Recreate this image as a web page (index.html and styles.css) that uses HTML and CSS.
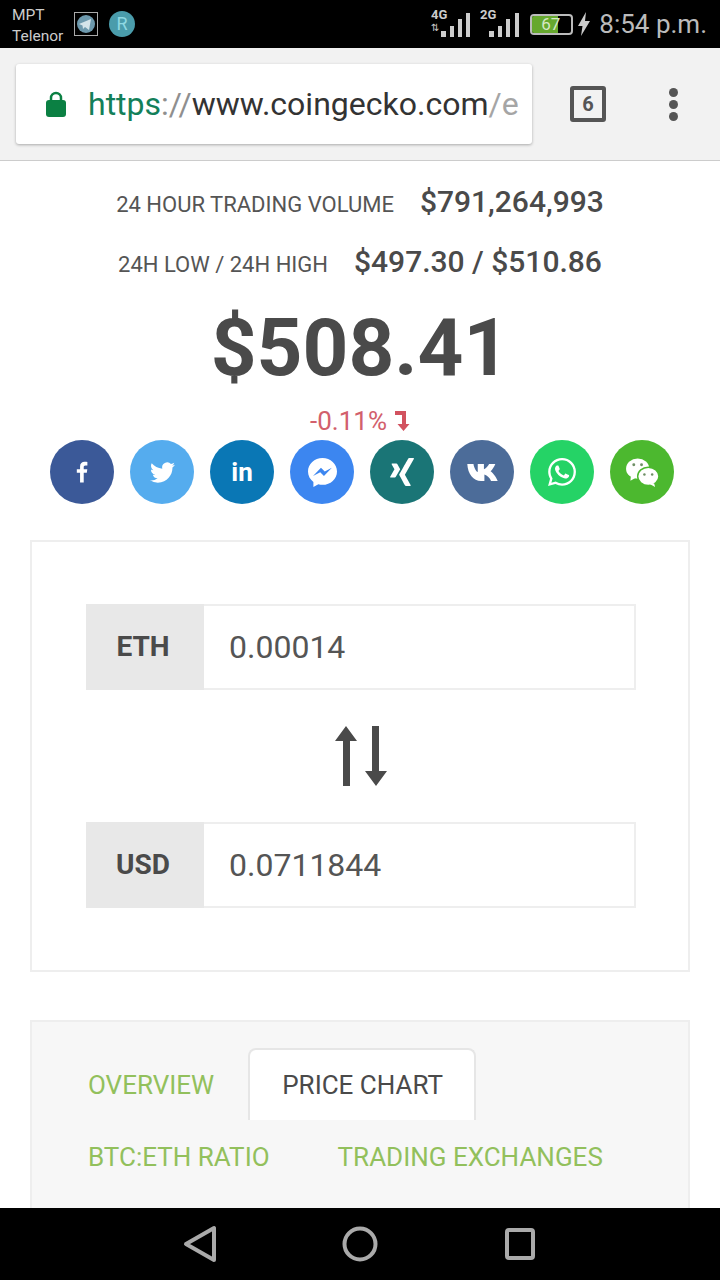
FILE: index.html
```html
<!DOCTYPE html>
<html>
<head>
  <title>Ethereum price</title>
  <link rel="stylesheet" href="styles.css">
</head>
<body>
  <!-- Phone status bar -->
  <div class="status-bar">
    <div class="status-left">
      <div class="carrier">MPT<br>Telenor</div>
      <div class="telegram-icon">
        <svg width="20" height="20" viewBox="0 0 20 20"><circle cx="10" cy="10" r="9" fill="#6d99ad"/><path d="M3 10l12-5-2 11-4-3-2 2-.5-3.500z" fill="#d5e4ea"/></svg>
      </div>
      <div class="r-badge">R</div>
    </div>
    <div class="status-right">
      <svg class="signal-one" width="40" height="36" viewBox="0 -3 40 36">
        <text x="0" y="10" class="signal-text">4G</text>
        <text x="0" y="22" class="signal-tiny">⇅</text>
        <rect x="10" y="22" width="5" height="6" fill="#ccc"/>
        <rect x="19" y="17" width="4" height="11" fill="#ccc"/>
        <rect x="27" y="10" width="4" height="18" fill="#ccc"/>
        <rect x="35" y="4" width="4" height="24" fill="#ccc"/>
      </svg>
      <svg class="signal-two" width="40" height="36" viewBox="0 -3 40 36">
        <text x="0" y="10" class="signal-text">2G</text>
        <rect x="9" y="22" width="5" height="6" fill="#ccc"/>
        <rect x="18" y="17" width="4" height="11" fill="#ccc"/>
        <rect x="26" y="10" width="4" height="18" fill="#ccc"/>
        <rect x="35" y="4" width="4" height="24" fill="#ccc"/>
      </svg>
      <div class="battery"><div class="battery-fill"></div><span class="battery-num">67</span></div>
      <svg class="bolt" width="12" height="24" viewBox="0 0 12 24"><path d="M8 0L0 14h4.500L3 24l9-15H7z" fill="#ccc"/></svg>
      <div class="clock">8:54 p.m.</div>
    </div>
  </div>

  <!-- Browser toolbar -->
  <div class="toolbar">
    <div class="url-box">
      <svg class="lock" width="20" height="26" viewBox="0 0 20 26"><path d="M5 10V7a5 5 0 0 1 10 0v3" fill="none" stroke="#0b8043" stroke-width="2.500"/><rect y="9" width="20" height="17" rx="3" fill="#0b8043"/></svg>
      <div class="url"><span class="url-green">https</span><span class="url-grey">://</span>www.coingecko.com<span class="url-light">/e</span></div>
    </div>
    <div class="tab-count">6</div>
    <div class="menu-dots"><span></span><span></span><span></span></div>
  </div>

  <div class="page">
    <div class="stat-row"><span class="stat-label">24 HOUR TRADING VOLUME</span><span class="stat-value">$791,264,993</span></div>
    <div class="stat-row"><span class="stat-label">24H LOW / 24H HIGH</span><span class="stat-value">$497.30 / $510.86</span></div>
    <div class="price">$508.41</div>
    <div class="change">-0.11%
      <svg width="16" height="20" viewBox="0 0 16 20"><path d="M1 0h11v13h3.500L9.500 20 3.500 13H8V4H1z" fill="#d2525f"/></svg>
    </div>

    <div class="share-row">
      <div class="share facebook">
        <svg width="13" height="22" viewBox="0 0 16 26"><path d="M5 26V14H1V9.500h4V6.300C5 2.300 7.400.5 10.600.5c1.500 0 2.800.1 3.400.2v4.200h-2.300c-1.800 0-2.200.9-2.200 2.100v2.500h4.400l-.6 4.500H9.500v12z" fill="#fff"/></svg>
      </div>
      <div class="share twitter">
        <svg width="25" height="25" viewBox="0 0 24 24"><path d="M23.953 4.570a10 10 0 0 1-2.825.775 4.958 4.958 0 0 0 2.163-2.723c-.951.555-2.005.959-3.127 1.184a4.920 4.920 0 0 0-8.384 4.482C7.690 8.095 4.067 6.130 1.640 3.162a4.822 4.822 0 0 0-.666 2.475c0 1.710.870 3.213 2.188 4.096a4.904 4.904 0 0 1-2.228-.616v.060a4.923 4.923 0 0 0 3.946 4.827 4.996 4.996 0 0 1-2.212.085 4.936 4.936 0 0 0 4.604 3.417 9.867 9.867 0 0 1-6.102 2.105c-.390 0-.779-.023-1.170-.067a13.995 13.995 0 0 0 7.557 2.209c9.053 0 13.998-7.496 13.998-13.985 0-.210 0-.420-.015-.630A9.935 9.935 0 0 0 24 4.590z" fill="#fff"/></svg>
      </div>
      <div class="share linkedin"><span class="in-logo">in</span></div>
      <div class="share messenger">
        <svg width="29" height="29" viewBox="0 0 24 24"><path d="M12 0C5.373 0 0 4.974 0 11.111c0 3.498 1.744 6.614 4.469 8.654V24l4.088-2.242c1.092.3 2.246.464 3.443.464 6.627 0 12-4.975 12-11.111S18.627 0 12 0zm1.191 14.963l-3.055-3.260-5.963 3.260L10.732 8l3.131 3.259L19.752 8l-6.561 6.963z" fill="#fff"/></svg>
      </div>
      <div class="share xing">
        <svg width="28" height="30" viewBox="0 0 24 24"><path d="M18.188 0c-.517 0-.741.325-.927.660 0 0-7.455 13.224-7.702 13.657.015.024 4.919 9.023 4.919 9.023.170.308.436.660.967.660h3.454c.211 0 .375-.078.463-.220.089-.151.089-.346-.009-.536l-4.879-8.916c-.004-.006-.004-.016 0-.022L22.139.756c.095-.191.097-.387.006-.535C22.056.078 21.894 0 21.686 0h-3.498zM3.648 4.740c-.211 0-.385.074-.473.216-.090.149-.078.339.020.531l2.340 4.050c.004.010.004.016 0 .021L1.860 16.051c-.099.188-.093.381 0 .529.085.142.239.234.450.234h3.461c.518 0 .766-.348.945-.667l3.734-6.609-2.378-4.155c-.172-.315-.434-.659-.962-.659H3.648v.016z" fill="#fff"/></svg>
      </div>
      <div class="share vk">
        <svg width="33" height="19" viewBox="0 0 34 20"><path d="M1 1h6.500c.6 4 2.800 8 4.500 8.500V1h6.500v5.500C20.500 6 22.500 3.500 24 1h6.500c-1 3-3.300 6-5 7.700 1.700 1.300 5.500 5 7.500 10.300h-7c-1.200-3-4-6-7-6.800V19h-3.500C7.500 19 1.500 11.500 1 1z" fill="#fff"/></svg>
      </div>
      <div class="share whatsapp">
        <svg width="28" height="28" viewBox="0 0 24 24"><path d="M17.472 14.382c-.297-.149-1.758-.867-2.030-.967-.273-.099-.471-.148-.670.150-.197.297-.767.966-.940 1.164-.173.199-.347.223-.644.075-.297-.150-1.255-.463-2.390-1.475-.883-.788-1.480-1.761-1.653-2.059-.173-.297-.018-.458.130-.606.134-.133.298-.347.446-.520.149-.174.198-.298.298-.497.099-.198.050-.371-.025-.520-.075-.149-.669-1.612-.916-2.207-.242-.579-.487-.500-.669-.510-.173-.008-.371-.010-.570-.010-.198 0-.520.074-.792.372-.272.297-1.040 1.016-1.040 2.479 0 1.462 1.065 2.875 1.213 3.074.149.198 2.096 3.200 5.077 4.487.709.306 1.262.489 1.694.625.712.227 1.360.195 1.871.118.571-.085 1.758-.719 2.006-1.413.248-.694.248-1.289.173-1.413-.074-.124-.272-.198-.570-.347m-5.421 7.403h-.004a9.870 9.870 0 0 1-5.031-1.378l-.361-.214-3.741.982.998-3.648-.235-.374a9.860 9.860 0 0 1-1.510-5.260c.001-5.450 4.436-9.884 9.888-9.884 2.640 0 5.122 1.030 6.988 2.898a9.825 9.825 0 0 1 2.893 6.994c-.003 5.450-4.437 9.884-9.885 9.884m8.413-18.297A11.815 11.815 0 0 0 12.050 0C5.495 0 .160 5.335.157 11.892c0 2.096.547 4.142 1.588 5.945L.057 24l6.305-1.654a11.882 11.882 0 0 0 5.683 1.448h.005c6.554 0 11.890-5.335 11.893-11.893a11.821 11.821 0 0 0-3.480-8.413z" fill="#fff"/></svg>
      </div>
      <div class="share wechat">
        <svg width="33" height="29" viewBox="0 0 34 30">
          <ellipse cx="12" cy="11" rx="12" ry="10.500" fill="#fff"/>
          <path d="M5 18l-.5 5.500L11 20z" fill="#fff"/>
          <ellipse cx="23" cy="19" rx="11" ry="9.500" fill="#fff" stroke="#4cb82f" stroke-width="1.500"/>
          <path d="M29 26l1 4-5.500-3z" fill="#fff"/>
          <circle cx="8" cy="7" r="1.500" fill="#6f8f66"/>
          <circle cx="16" cy="7" r="1.500" fill="#6f8f66"/>
          <circle cx="19" cy="17" r="1.300" fill="#6f8f66"/>
          <circle cx="27" cy="17" r="1.300" fill="#6f8f66"/>
        </svg>
      </div>
    </div>

    <!-- Converter -->
    <div class="converter">
      <div class="convert-row">
        <div class="coin">ETH</div>
        <div class="amount">0.00014</div>
      </div>
      <div class="swap">
        <svg width="52" height="60" viewBox="0 0 52 60">
          <path d="M11 0l11 15h-7v45H8V15H0z" fill="#4a4a4a"/>
          <path d="M41 60L30 45h7V0h7v45h8z" fill="#4a4a4a"/>
        </svg>
      </div>
      <div class="convert-row">
        <div class="coin">USD</div>
        <div class="amount">0.0711844</div>
      </div>
    </div>

    <!-- Tabs -->
    <div class="tabs-card">
      <div class="tabs">
        <div class="tab">OVERVIEW</div>
        <div class="tab active">PRICE CHART</div>
        <div class="tab">BTC:ETH RATIO</div>
        <div class="tab">TRADING EXCHANGES</div>
      </div>
    </div>
  </div>

  <!-- Android nav buttons -->
  <div class="nav-bar">
    <svg width="34" height="38" viewBox="0 0 34 38"><path d="M31 3v32L3 19z" fill="none" stroke="#aaa" stroke-width="4" stroke-linejoin="round"/></svg>
    <svg width="36" height="36" viewBox="0 0 36 36"><circle cx="18" cy="18" r="15.500" fill="none" stroke="#aaa" stroke-width="4"/></svg>
    <svg width="32" height="32" viewBox="0 0 32 32"><rect x="4" y="2" width="26" height="28" rx="2" fill="none" stroke="#aaa" stroke-width="4"/></svg>
  </div>
</body>
</html>
```

FILE: styles.css
```css
* {
  box-sizing: border-box;
}

body {
  font-family: Roboto, sans-serif;
  margin: 0;
  width: 720px;
  height: 1280px;
  overflow: hidden;
  display: flex;
  flex-direction: column;
  background-color: #fff;
  color: #4a4a4a;
}

/* Status bar */
.status-bar {
  height: 48px;
  flex-shrink: 0;
  background-color: #000;
  color: #ccc;
  display: flex;
  justify-content: space-between;
  align-items: center;
  padding: 0 13px 0 12px;
}

.status-left,
.status-right {
  display: flex;
  align-items: center;
}

.carrier {
  font-size: 15.5px;
  line-height: 21px;
  width: 62px;
  margin-top: 3px;
}

.telegram-icon {
  width: 24px;
  height: 24px;
  border: 1px solid #aaa;
  display: flex;
  align-items: center;
  justify-content: center;
}

.r-badge {
  width: 26px;
  height: 26px;
  margin-left: 11px;
  border-radius: 50%;
  background-color: #4a9cab;
  color: #8fd8e2;
  font-size: 18px;
  line-height: 26px;
  text-align: center;
}

.signal-text {
  font-family: Roboto, sans-serif;
  font-size: 13px;
  font-weight: 700;
  fill: #ccc;
}

.signal-tiny {
  font-family: "DejaVu Sans", sans-serif;
  font-size: 10px;
  fill: #ccc;
}

.signal-two {
  margin-left: 9px;
}

.battery {
  position: relative;
  width: 43px;
  height: 21px;
  margin-left: 10px;
  border: 2px solid #bbb;
  border-radius: 4px;
  overflow: hidden;
}

.battery-fill {
  width: 67%;
  height: 100%;
  background-color: #66a82e;
}

/* number sits over the fill */
.battery-num {
  position: absolute;
  top: 0;
  left: 9px;
  font-size: 17px;
  line-height: 17px;
  color: #d6e8c4;
}

.bolt {
  margin-left: 5px;
}

.clock {
  font-size: 26px;
  margin-left: 9px;
  color: #bbb;
}

/* Browser toolbar */
.toolbar {
  height: 113px;
  flex-shrink: 0;
  background-color: #f2f2f2;
  border-bottom: 1px solid #ccc;
  display: flex;
  align-items: flex-start;
  padding: 16px 0 0 16px;
}

.url-box {
  width: 516px;
  height: 80px;
  background-color: #fff;
  border-radius: 3px;
  box-shadow: 0 1px 3px rgba(0, 0, 0, 0.3);
  display: flex;
  align-items: center;
  padding-left: 30px;
  overflow: hidden;
}

.url {
  margin-left: 22px;
  font-size: 32px;
  color: #333;
  white-space: nowrap;
}

.url-green {
  color: #13805a;
}

.url-grey {
  color: #8f8f8f;
}

.url-light {
  color: #a5a5a5;
}

.tab-count {
  width: 36px;
  height: 36px;
  margin: 22px 0 0 38px;
  border: 4px solid #555;
  border-radius: 3px;
  font-size: 20px;
  font-weight: 700;
  line-height: 28px;
  text-align: center;
  color: #555;
}

.menu-dots {
  display: flex;
  flex-direction: column;
  gap: 3px;
  margin: 24px 0 0 63px;
}

.menu-dots span {
  width: 9px;
  height: 9px;
  border-radius: 50%;
  background-color: #555;
}

/* Page content */
.page {
  flex: 1;
  min-height: 0;
  overflow: hidden;
  padding: 12px 30px 0;
}

.stat-row {
  height: 60px;
  display: flex;
  justify-content: center;
  align-items: center;
  gap: 26px;
}

.stat-label {
  font-size: 22px;
  color: #555;
  margin-top: 2px;
}

.stat-value {
  font-size: 30px;
  font-weight: 500;
  margin-bottom: 3px;
}

.price {
  height: 108px;
  line-height: 110px;
  text-align: center;
  font-size: 80px;
  font-weight: 700;
}

.change {
  height: 39px;
  display: flex;
  justify-content: center;
  align-items: center;
  gap: 7px;
  font-size: 26px;
  color: #d2606c;
}

.share-row {
  display: flex;
  justify-content: center;
  gap: 16px;
  padding-left: 4px;
  margin: 0 -30px;
}

.share {
  width: 64px;
  height: 64px;
  border-radius: 50%;
  display: flex;
  align-items: center;
  justify-content: center;
}

.facebook { background-color: #3b5998; }
.twitter { background-color: #55acee; }
.linkedin { background-color: #0a77b5; }
.messenger { background-color: #3c86f0; }
.xing { background-color: #1a7576; }
.vk { background-color: #4c6c99; }
.whatsapp { background-color: #25d366; }
.wechat { background-color: #4cb82f; }

.in-logo {
  font-size: 26px;
  font-weight: 700;
  color: #fff;
}

.converter {
  margin-top: 36px;
  height: 432px;
  border: 2px solid #eee;
  padding: 62px 52px 62px 54px;
}

.convert-row {
  height: 86px;
  display: flex;
  border: 2px solid #eee;
}

.coin {
  width: 118px;
  margin: -2px 0 -2px -2px;
  padding-right: 4px;
  background-color: #e8e8e8;
  font-size: 28px;
  font-weight: 700;
  line-height: 86px;
  text-align: center;
}

.amount {
  font-size: 32px;
  line-height: 82px;
  padding-left: 25px;
  color: #555;
}

.swap {
  height: 132px;
  display: flex;
  align-items: center;
  justify-content: center;
}

.tabs-card {
  margin-top: 48px;
  height: 300px;
  background-color: #f7f7f7;
  border: 2px solid #eee;
  padding: 26px 0 0 22px;
}

.tabs {
  display: flex;
  flex-wrap: wrap;
  width: 620px;
}

.tab {
  height: 72px;
  line-height: 74px;
  padding: 0 34px;
  font-size: 26px;
  color: #92c05c;
}

.tab.active {
  width: 228px;
  background-color: #fff;
  border: 2px solid #e6e6e6;
  border-bottom: none;
  border-radius: 8px 8px 0 0;
  color: #4a4a4a;
  line-height: 70px;
  padding: 0 32px;
  margin-right: 100px;
  white-space: nowrap;
}

/* Android nav */
.nav-bar {
  height: 72px;
  flex-shrink: 0;
  background-color: #000;
  display: flex;
  align-items: center;
  justify-content: center;
  gap: 125px;
  padding-right: 2px;
}
```
